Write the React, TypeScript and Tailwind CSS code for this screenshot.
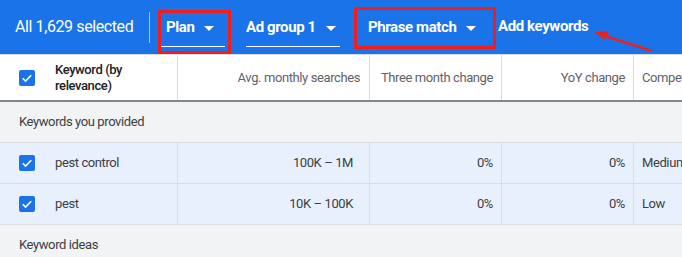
const rows = [
  { keyword: 'pest control', avg: '100K – 1M', three: '0%', yoy: '0%', comp: 'Medium' },
  { keyword: 'pest', avg: '10K – 100K', three: '0%', yoy: '0%', comp: 'Low' },
];

const Checkbox = () => (
  <div className="w-4 h-4 shrink-0 rounded-[2px] bg-[#1a73e8] flex items-center justify-center">
    <svg width="12" height="12" viewBox="0 0 24 24" fill="none">
      <path d="M3.5 12.5l5.5 5.5L20.5 6.5" stroke="white" strokeWidth="3.2" />
    </svg>
  </div>
);

const Caret = () => (
  <svg width="10" height="5" viewBox="0 0 10 5" className="ml-2.5">
    <path d="M0 0h10L5 5z" fill="white" />
  </svg>
);

const grid = 'grid grid-cols-[178px_192px_132px_132px_1fr]';

export default function App() {
  return (
    <div
      className="relative w-[682px] h-[257px] overflow-hidden bg-[#f1f3f4] tracking-[-0.4px]"
      style={{ fontFamily: 'Roboto, "Liberation Sans", sans-serif' }}
    >
      {/* top bar */}
      <div className="h-[54px] bg-[#1a73e8] flex items-center text-white">
        <span className="pl-[15px] text-[16px] w-[149px]">All 1,629 selected</span>
        <div className="w-px h-[31px] bg-[#a8c7fa]" />
        <div className="ml-[11px] h-[40px] flex items-start pt-[13px]">
          <div className="w-[64px] h-[27px] flex items-start pl-[5px] border-b border-white">
            <span className="text-[15px] font-bold leading-none">Plan</span>
            <div className="mt-[6px]"><Caret /></div>
          </div>
        </div>
        <div className="ml-[21px] h-[40px] flex items-start pt-[13px]">
          <div className="w-[94px] h-[27px] flex items-start border-b border-white">
            <span className="text-[15px] font-bold leading-none">Ad group 1</span>
            <div className="mt-[6px]"><Caret /></div>
          </div>
        </div>
        <div className="ml-[19px] h-[40px] flex items-start pt-[13px]">
          <div className="w-[127px] h-[27px] flex items-start pl-[9px] border-b border-white">
            <span className="text-[15px] font-bold leading-none">Phrase match</span>
            <div className="mt-[6px]"><Caret /></div>
          </div>
        </div>
        <span className="ml-[12px] text-[15px] font-bold leading-none -mt-[1px]">Add keywords</span>
      </div>

      {/* header row */}
      <div className={`${grid} h-[48px] bg-white border-t border-[#dadce0] border-b-2 border-b-[#80868b] text-[13px] text-[#5f6368]`}>
        <div className="flex items-center border-r border-[#dadce0]">
          <div className="pl-[19px] w-[55px] shrink-0"><Checkbox /></div>
          <span className="font-medium text-[#202124] leading-[16px] w-[80px]">Keyword (by relevance)</span>
        </div>
        <div className="flex items-center justify-end pr-[9px] border-r border-[#dadce0]">Avg. monthly searches</div>
        <div className="flex items-center justify-end pr-[8px] border-r border-[#dadce0]">Three month change</div>
        <div className="flex items-center justify-end pr-[8px] border-r border-[#dadce0]">YoY change</div>
        <div className="flex items-center pl-[8px] whitespace-nowrap">Competition</div>
      </div>

      {/* section */}
      <div className="h-[41px] flex items-center pl-[19px] text-[13px] text-[#3c4043] border-b border-[#dadce0]">
        Keywords you provided
      </div>

      {rows.map((r) => (
        <div key={r.keyword} className={`${grid} h-[41px] bg-[#e8f0fe] border-b border-[#dadce0] text-[13px] text-[#3c4043]`}>
          <div className="flex items-center border-r border-[#dadce0]">
            <div className="pl-[19px] w-[55px] shrink-0"><Checkbox /></div>
            <span>{r.keyword}</span>
          </div>
          <div className="flex items-center justify-end pr-[16px] border-r border-[#dadce0]">{r.avg}</div>
          <div className="flex items-center justify-end pr-[8px] border-r border-[#dadce0]">{r.three}</div>
          <div className="flex items-center justify-end pr-[8px] border-r border-[#dadce0]">{r.yoy}</div>
          <div className="flex items-center pl-[8px] whitespace-nowrap">{r.comp}</div>
        </div>
      ))}

      <div className="h-[40px] flex items-center pl-[19px] text-[13px] text-[#3c4043]">Keyword ideas</div>

      {/* annotations */}
      <div className="absolute left-[158px] top-[10px] w-[73px] h-[44px] border-[3px] border-[#f21c1c]" />
      <div className="absolute left-[354px] top-[7px] w-[142px] h-[42px] border-[3px] border-[#f21c1c]" />
      <svg className="absolute left-0 top-0" width="682" height="257">
        <line x1="652" y1="51" x2="602" y2="35" stroke="#e52420" strokeWidth="2.5" />
        <path d="M594 32L609 31L605 40Z" fill="#e52420" />
      </svg>
    </div>
  );
}
